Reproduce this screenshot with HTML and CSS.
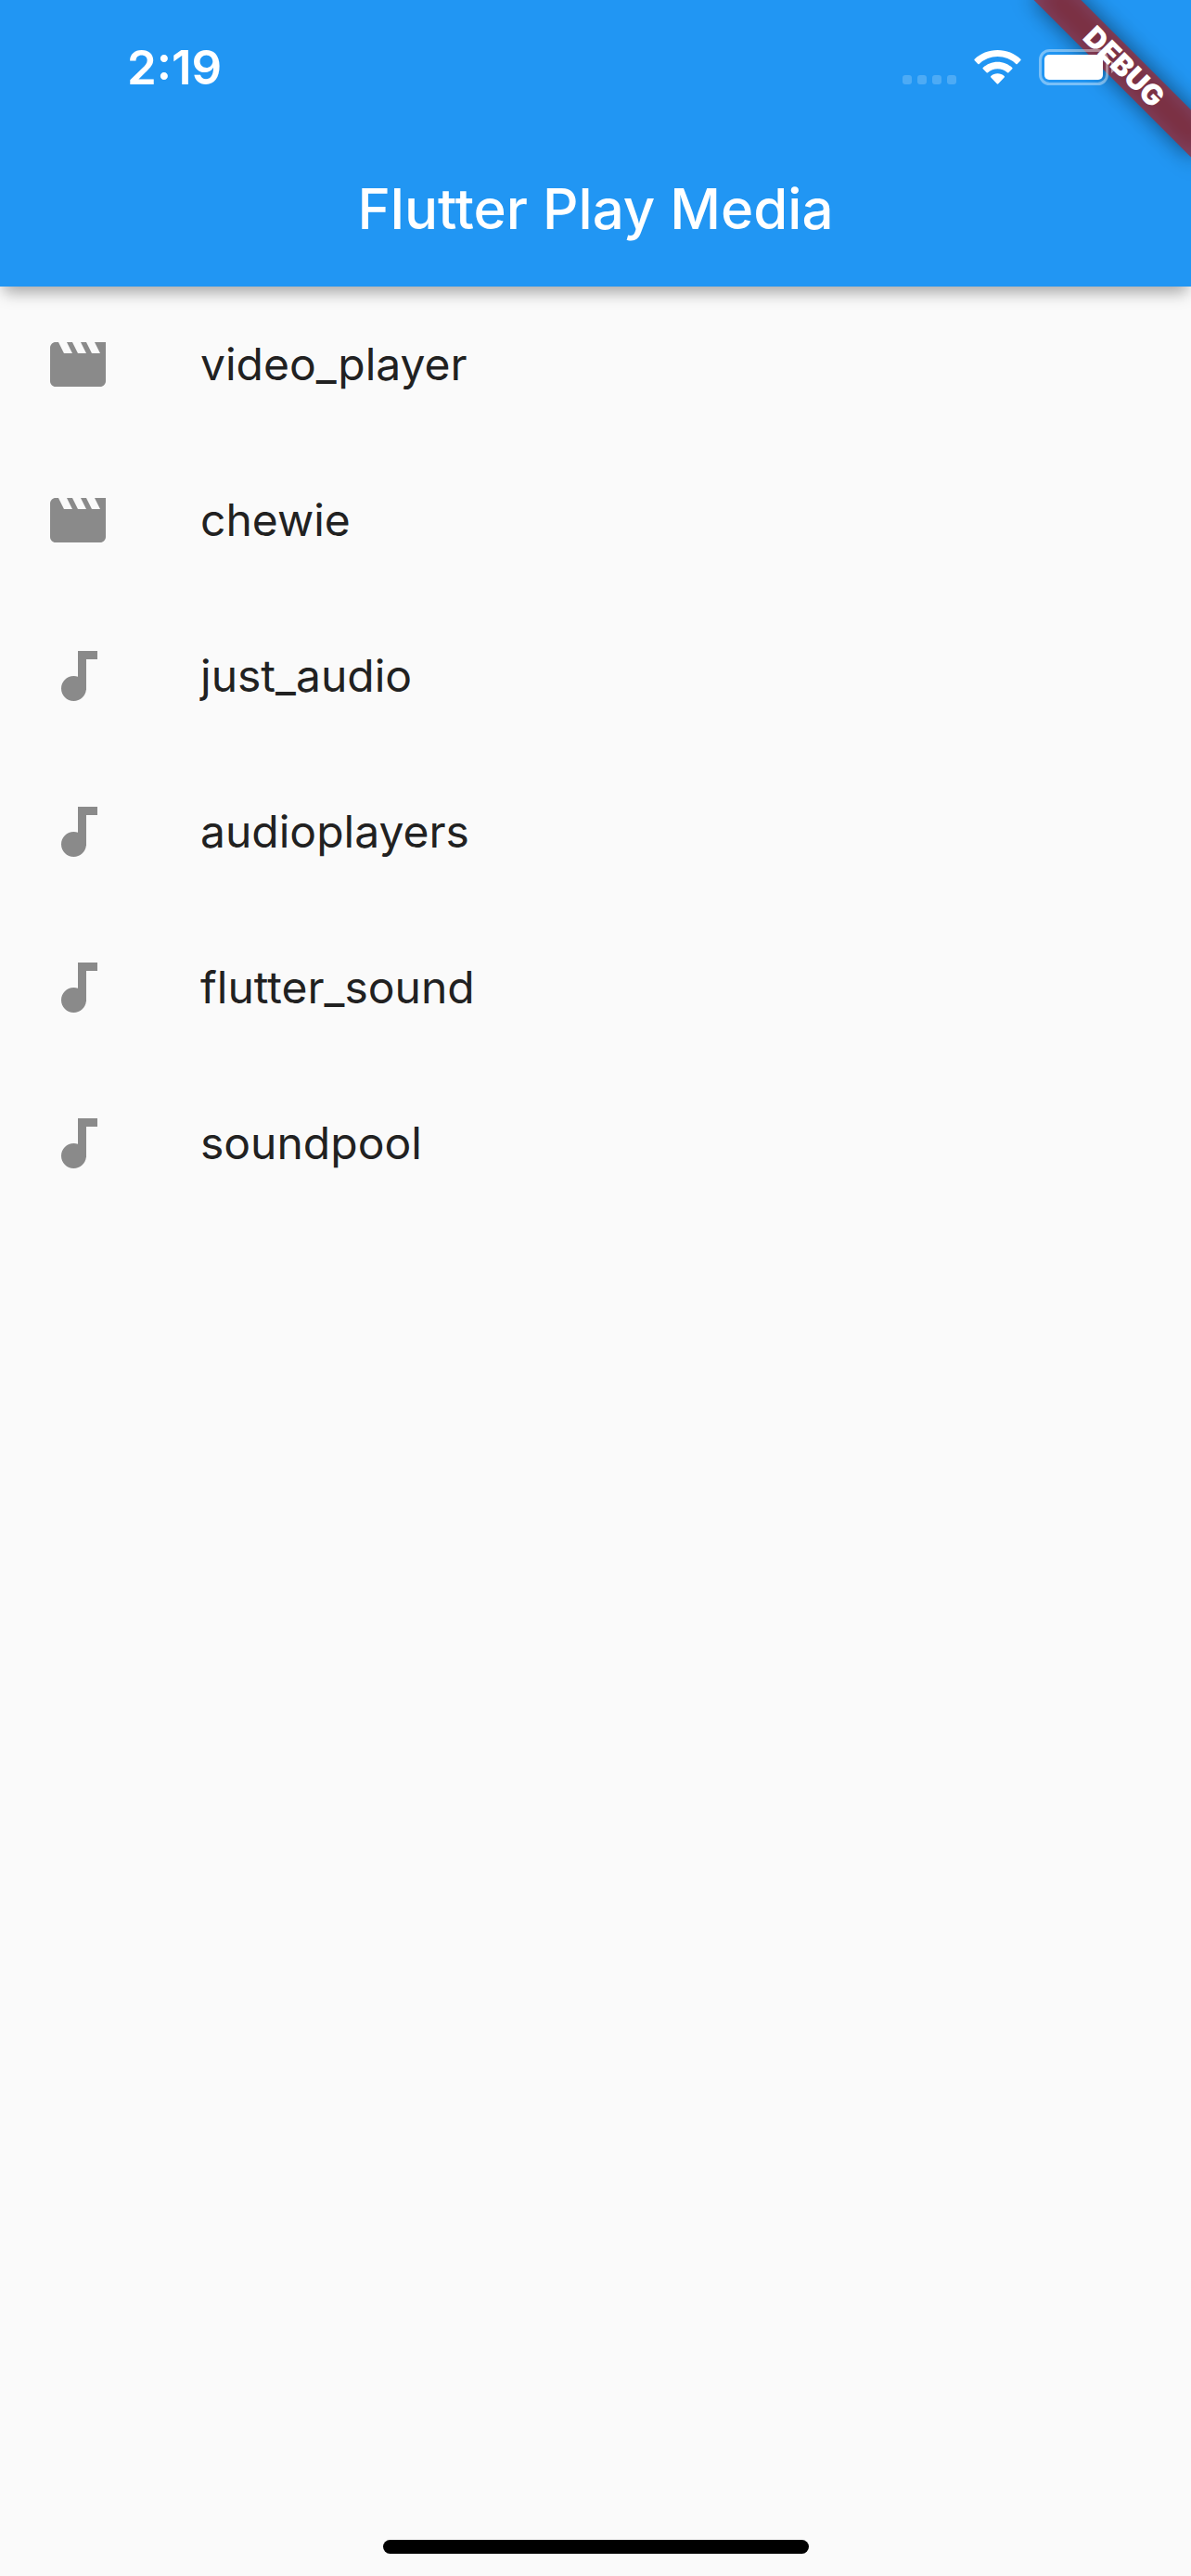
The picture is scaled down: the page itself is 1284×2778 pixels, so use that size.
FILE: index.html
```
<!DOCTYPE html>
<html lang="en">
<head>
<meta charset="utf-8">
<meta name="viewport" content="width=device-width, initial-scale=1">
<title>Flutter Play Media</title>
<link rel="stylesheet" href="styles.css">
</head>
<body class="app">
  <svg width="0" height="0" class="sprite" aria-hidden="true">
    <symbol id="movie" viewBox="0 0 24 24"><path d="M18 4l2 4h-3l-2-4h-2l2 4h-3l-2-4H8l2 4H7L5 4H4c-1.100 0-1.990.9-1.990 2L2 18c0 1.100.9 2 2 2h16c1.100 0 2-.9 2-2V4h-4z"/></symbol>
    <symbol id="track" viewBox="0 0 24 24"><path d="M12 3v9.280c-.47-.17-.97-.28-1.500-.28C8.010 12 6 14.010 6 16.500S8.010 21 10.500 21c2.310 0 4.200-1.750 4.450-4H15V6h4V3h-7z"/></symbol>
  </svg>
  <header class="app-bar">
    <div class="status-bar">
      <time class="clock">2:19</time>
      <div class="indicators">
        <svg class="indicator" width="58" height="39" viewBox="0 0 58 39" fill="#fff" fill-opacity=".2" role="img" aria-label="No signal">
          <rect x="0" y="28" width="10" height="10" rx="3"/><rect x="16" y="28" width="10" height="10" rx="3"/><rect x="32" y="28" width="10" height="10" rx="3"/><rect x="48" y="28" width="10" height="10" rx="3"/>
        </svg>
        <svg class="indicator" width="51" height="39" viewBox="0 0 51 39" fill="#fff" role="img" aria-label="Wi-Fi">
          <path d="M25.500 1C35 1 44 4.600 50.300 10.800q.7.7 0 1.400L46.700 16q-.7.6-1.400 0A28.500 28.500 0 0 0 5.700 16q-.7.6-1.400 0L.7 12.200q-.7-.7 0-1.400C7 4.600 16 1 25.500 1z"/>
          <path d="M25.500 13.700c6.100 0 11.600 2.400 15.800 6.200q.7.700 0 1.400l-3.900 4q-.7.6-1.400 0a15.600 15.600 0 0 0-21 0q-.7.6-1.400 0l-3.900-4q-.7-.7 0-1.400c4.200-3.800 9.700-6.200 15.800-6.200z"/>
          <path d="M25.500 26.300c2.700 0 5.200 1 7.200 2.700q.7.700 0 1.400l-6.400 6.900q-.8.700-1.600 0l-6.400-6.900q-.7-.7 0-1.400c2-1.700 4.500-2.700 7.200-2.700z"/>
        </svg>
        <svg class="indicator" width="82" height="39" viewBox="0 0 82 39" role="img" aria-label="Battery full">
          <rect x="1.500" y="1.500" width="72" height="36" rx="10" fill="none" stroke="#fff" stroke-opacity=".4" stroke-width="3"/>
          <rect x="6" y="6" width="63" height="27" rx="5" fill="#fff"/>
          <path d="M78 13q4 2 4 6.500T78 26z" fill="#fff" fill-opacity=".45"/>
        </svg>
      </div>
    </div>
    <h1 class="title">Flutter Play Media</h1>
    <div class="banner"><span class="ribbon">DEBUG</span></div>
  </header>
  <main class="content">
    <ul class="list">
      <li><a class="tile" href="#video_player"><svg class="tile-icon" aria-hidden="true"><use href="#movie"/></svg>video_player</a></li>
      <li><a class="tile" href="#chewie"><svg class="tile-icon" aria-hidden="true"><use href="#movie"/></svg>chewie</a></li>
      <li><a class="tile" href="#just_audio"><svg class="tile-icon" aria-hidden="true"><use href="#track"/></svg>just_audio</a></li>
      <li><a class="tile" href="#audioplayers"><svg class="tile-icon" aria-hidden="true"><use href="#track"/></svg>audioplayers</a></li>
      <li><a class="tile" href="#flutter_sound"><svg class="tile-icon" aria-hidden="true"><use href="#track"/></svg>flutter_sound</a></li>
      <li><a class="tile" href="#soundpool"><svg class="tile-icon" aria-hidden="true"><use href="#track"/></svg>soundpool</a></li>
    </ul>
  </main>
  <footer class="home-area"><div class="home-indicator"></div></footer>
</body>
</html>
```

FILE: styles.css
```
* {
  box-sizing: border-box;
}

.app {
  display: flex;
  flex-direction: column;
  min-height: 100vh;
  margin: 0;
  background: #fafafa;
  color: #212121;
  font-family: Inter, "Liberation Sans", sans-serif;
}

.sprite {
  position: absolute;
}

/* App bar */

.app-bar {
  position: relative;
  background: #2196f3;
  color: #fff;
  box-shadow: 0 10px 16px -4px rgba(0, 0, 0, .35);
}

.status-bar {
  position: relative;
  z-index: 2;
  display: flex;
  align-items: center;
  justify-content: space-between;
  height: 141px;
  padding: 4px 82px 0 137px;
}

.clock {
  font-size: 51px;
  font-weight: 600;
  line-height: 60px;
}

.indicators {
  display: flex;
  gap: 19px;
}

.indicator {
  display: block;
}

.title {
  margin: 0;
  padding: 48px;
  font-size: 60px;
  font-weight: 500;
  line-height: 72px;
  text-align: center;
}

/* Corner ribbon */

.banner {
  position: absolute;
  top: 0;
  right: 0;
  z-index: 1;
  width: 240px;
  height: 240px;
  overflow: hidden;
}

.ribbon {
  position: absolute;
  top: 54px;
  right: -48px;
  width: 240px;
  height: 36px;
  font-size: 31px;
  font-weight: 900;
  line-height: 36px;
  text-align: center;
  transform: rotate(45deg);
}

.ribbon::before,
.ribbon::after {
  content: "";
  position: absolute;
  inset: 0;
  z-index: -1;
}

.ribbon::before {
  background: rgba(0, 0, 0, .5);
  filter: blur(12px);
}

.ribbon::after {
  background: rgba(183, 28, 28, .63);
}

/* List */

.content {
  flex: 1;
}

.list {
  margin: 0;
  padding: 0;
  list-style: none;
}

.tile {
  display: flex;
  align-items: center;
  gap: 96px;
  padding: 48px;
  color: inherit;
  font-size: 48px;
  line-height: 72px;
  text-decoration: none;
}

.tile-icon {
  flex: none;
  width: 72px;
  height: 72px;
  fill: #8a8a8a;
}

/* Home indicator */

.home-area {
  display: flex;
  justify-content: center;
  padding: 24px;
}

.home-indicator {
  width: 459px;
  height: 15px;
  border-radius: 8px;
  background: #000;
}
```
